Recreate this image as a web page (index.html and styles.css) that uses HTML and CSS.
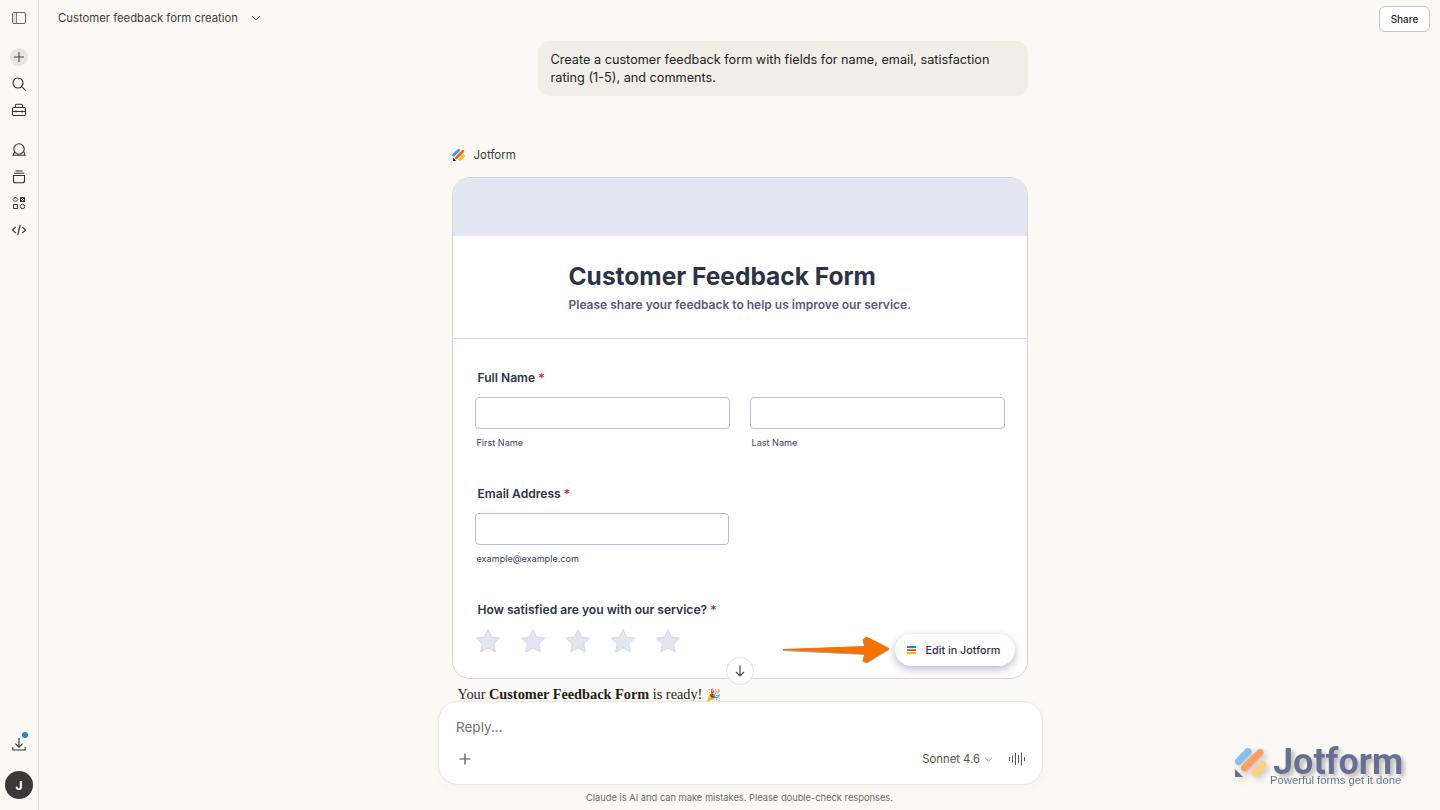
FILE: index.html
```html
<!DOCTYPE html>
<html lang="en">
<head>
    <meta charset="UTF-8">
    <meta name="viewport" content="width=device-width, initial-scale=1.0">
    <title>Customer feedback form creation</title>
    <link rel="stylesheet" href="styles.css">
</head>
<body>
    <aside class="sidebar">
        <button class="side-btn side-toggle">
            <svg width="16" height="16" viewBox="0 0 16 16" fill="none" stroke="#6b6a65" stroke-width="1"><rect x="1.5" y="2.5" width="13" height="11" rx="1.5"/><path d="M5.5 2.5v11"/><rect x="2" y="3" width="3.5" height="10" fill="#c9c8c2" stroke="none" opacity=".5"/></svg>
        </button>
        <div class="side-group">
            <button class="side-btn side-new">
                <svg width="14" height="14" viewBox="0 0 14 14" fill="none" stroke="#4a4945" stroke-width="1.1"><path d="M7 2v10M2 7h10"/></svg>
            </button>
            <button class="side-btn">
                <svg width="16" height="16" viewBox="0 0 16 16" fill="none" stroke="#33322f" stroke-width="1.1"><circle cx="7" cy="7" r="5"/><path d="M10.7 10.7l4 4"/></svg>
            </button>
            <button class="side-btn">
                <svg width="16" height="16" viewBox="0 0 16 16" fill="none" stroke="#33322f" stroke-width="1.1"><rect x="1.5" y="5.5" width="13" height="8" rx="1.2"/><path d="M4.5 5.5V3.2c0-.6.4-1 1-1h5c.6 0 1 .4 1 1v2.3M1.5 9.5h13M5 8.5v2M11 8.5v2"/></svg>
            </button>
        </div>
        <div class="side-group side-group-two">
            <button class="side-btn">
                <svg width="16" height="16" viewBox="0 0 16 16" fill="none" stroke="#33322f" stroke-width="1.1"><circle cx="8" cy="7" r="5.2"/><path d="M3.7 10L2 13.3h12l-1.3-4"/></svg>
            </button>
            <button class="side-btn">
                <svg width="16" height="16" viewBox="0 0 16 16" fill="none" stroke="#33322f" stroke-width="1.1"><path d="M4.4 2h7.2M2.8 4.2h10.4"/><path d="M2.5 6.5h11v5.3c0 1.1-.9 2-2 2h-7c-1.1 0-2-.9-2-2z"/></svg>
            </button>
            <button class="side-btn">
                <svg width="14" height="14" viewBox="0 0 14 14" fill="none" stroke="#33322f" stroke-width="1"><path d="M3.5 1L6 3.5 3.5 6 1 3.5z"/><path d="M8.5 1.5h4v4h-4zM8.5 1.5l4 4M12.5 1.5l-4 4"/><path d="M1.5 8.5h4v4h-4z"/><circle cx="10.5" cy="10.5" r="2.2"/></svg>
            </button>
            <button class="side-btn">
                <svg width="16" height="16" viewBox="0 0 16 16" fill="none" stroke="#33322f" stroke-width="1.1"><path d="M4.8 4.8L1.5 8l3.3 3.2M11.2 4.8L14.5 8l-3.3 3.2M9.2 3L6.8 13"/></svg>
            </button>
        </div>
        <div class="side-bottom">
            <button class="side-btn side-download">
                <svg width="16" height="16" viewBox="0 0 16 16" fill="none" stroke="#33322f" stroke-width="1.1"><path d="M8 2v9M4.4 7.6L8 11.2l3.6-3.6M1.8 11v3h12.4v-3"/></svg>
                <span class="notify-dot"></span>
            </button>
            <div class="avatar">J</div>
        </div>
    </aside>

    <main class="main">
        <header class="topbar">
            <div class="chat-title">
                <span>Customer feedback form creation</span>
                <svg width="12" height="12" viewBox="0 0 12 12" fill="none" stroke="#55534e" stroke-width="1"><path d="M2 4l4 4 4-4"/></svg>
            </div>
            <button class="share-btn">Share</button>
        </header>

        <div class="chat">
            <div class="user-msg">Create a customer feedback form with fields for name, email, satisfaction rating (1-5), and comments.</div>

            <div class="tool-label">
                <svg width="14" height="14" viewBox="0 0 14 14"><path d="M1.5 7.3L6.6 2.2" stroke="#3f97ef" stroke-width="2.8" stroke-linecap="round"/><path d="M4.4 9.7l6.4-6.5" stroke="#ff6100" stroke-width="2.8" stroke-linecap="round"/><path d="M8 11.4l3.4-3.4" stroke="#ffb629" stroke-width="2.8" stroke-linecap="round"/><path d="M1 9.8v3.2h3.2z" fill="#0a1551"/></svg>
                <span>Jotform</span>
            </div>

            <section class="form-card">
                <div class="form-banner"></div>
                <div class="form-head">
                    <h1>Customer Feedback Form</h1>
                    <p>Please share your feedback to help us improve our service.</p>
                </div>
                <div class="form-body">
                    <div class="field field-name">
                        <label>Full Name <em>*</em></label>
                        <div class="name-row">
                            <div>
                                <div class="input"></div>
                                <small>First Name</small>
                            </div>
                            <div>
                                <div class="input"></div>
                                <small>Last Name</small>
                            </div>
                        </div>
                    </div>
                    <div class="field field-email">
                        <label>Email Address <em>*</em></label>
                        <div class="input input-email"></div>
                        <small>example@example.com</small>
                    </div>
                    <div class="field">
                        <label>How satisfied are you with our service? <em>*</em></label>
                        <div class="stars">
                            <svg class="star" viewBox="0 0 26 26"><path d="M13 1.5l3.5 7.6 8.2 1-6 5.7 1.6 8.2-7.3-4.1-7.3 4.1 1.6-8.2-6-5.7 8.2-1z"/></svg>
                            <svg class="star" viewBox="0 0 26 26"><path d="M13 1.5l3.5 7.6 8.2 1-6 5.7 1.6 8.2-7.3-4.1-7.3 4.1 1.6-8.2-6-5.7 8.2-1z"/></svg>
                            <svg class="star" viewBox="0 0 26 26"><path d="M13 1.5l3.5 7.6 8.2 1-6 5.7 1.6 8.2-7.3-4.1-7.3 4.1 1.6-8.2-6-5.7 8.2-1z"/></svg>
                            <svg class="star" viewBox="0 0 26 26"><path d="M13 1.5l3.5 7.6 8.2 1-6 5.7 1.6 8.2-7.3-4.1-7.3 4.1 1.6-8.2-6-5.7 8.2-1z"/></svg>
                            <svg class="star" viewBox="0 0 26 26"><path d="M13 1.5l3.5 7.6 8.2 1-6 5.7 1.6 8.2-7.3-4.1-7.3 4.1 1.6-8.2-6-5.7 8.2-1z"/></svg>
                        </div>
                    </div>
                </div>
                <button class="edit-btn">
                    <span class="edit-icon"><i></i><i></i><i></i></span>
                    Edit in Jotform
                </button>
            </section>

            <!-- orange callout drawn on top of the screenshot -->
            <svg class="callout-arrow" width="110" height="28" viewBox="0 0 110 28">
                <path d="M1 13.5L83 10.5 81 3.5 84.5 1 107 12.5 85 26 81 24.5 83 17.5z" fill="#f47200" stroke="#f47200" stroke-width="1" stroke-linejoin="round"/>
            </svg>

            <button class="scroll-down">
                <svg width="14" height="14" viewBox="0 0 14 14" fill="none" stroke="#4a4945" stroke-width="1.2"><path d="M7 1.5v10.5M3 8l4 4 4-4"/></svg>
            </button>

            <p class="reply-msg">Your <strong>Customer Feedback Form</strong> is ready! <span class="party">🎉</span></p>
        </div>

        <div class="composer">
            <div class="composer-input">Reply...</div>
            <div class="composer-row">
                <svg width="14" height="14" viewBox="0 0 14 14" fill="none" stroke="#55534e" stroke-width="1.2"><path d="M7 1.5v11M1.5 7h11"/></svg>
                <div class="composer-right">
                    <span class="model">Sonnet 4.6</span>
                    <svg width="9" height="9" viewBox="0 0 10 10" fill="none" stroke="#9a9993" stroke-width="1"><path d="M1.5 3.5L5 7l3.5-3.5"/></svg>
                    <svg class="voice" width="18" height="16" viewBox="0 0 18 16" fill="none" stroke="#55534e" stroke-width="1"><path d="M1.5 6v4M4.5 4.5v7M7.5 2v12M10.5 4v8M13.5 1.5v13M16.5 6v4"/></svg>
                </div>
            </div>
        </div>
        <p class="disclaimer">Claude is AI and can make mistakes. Please double-check responses.</p>

        <div class="watermark">
            <svg width="34" height="34" viewBox="0 0 34 34"><g stroke-linecap="round" stroke-width="7"><path d="M4.5 16.5L14 6.5" stroke="#3f97ef"/><path d="M10.5 23L26 7.5" stroke="#ff6100"/><path d="M21 28L29 20" stroke="#ffb629"/></g><path d="M1 24v8h8z" fill="#0a1551"/></svg>
            <div class="watermark-text">
                <span class="watermark-name">Jotform</span>
                <span class="watermark-tag">Powerful forms get it done</span>
            </div>
        </div>
    </main>
</body>
</html>
```

FILE: styles.css
```css
* {
    margin: 0;
    padding: 0;
    box-sizing: border-box;
}

body {
    font-family: 'Inter', sans-serif;
    background-color: #faf9f5;
    color: #1f1e1d;
    display: flex;
    height: 100vh;
    overflow: hidden;
}

button {
    border: none;
    background: none;
    font-family: inherit;
    cursor: pointer;
}

/* Sidebar */
.sidebar {
    width: 39px;
    flex-shrink: 0;
    border-right: 1px solid #dedcd5;
    display: flex;
    flex-direction: column;
    align-items: center;
    padding-top: 5px;
}

.side-btn {
    width: 26px;
    height: 26px;
    display: flex;
    align-items: center;
    justify-content: center;
    border-radius: 50%;
    position: relative;
}

.side-group {
    display: flex;
    flex-direction: column;
    gap: 0.5px;
    margin-top: 13px;
}

.side-group-two {
    margin-top: 14px;
}

.side-new {
    width: 18px;
    height: 18px;
    margin: 4px;
    background-color: #e6e5e0;
}

.side-bottom {
    margin-top: auto;
    display: flex;
    flex-direction: column;
    align-items: center;
    gap: 14px;
    padding-bottom: 11px;
}

.notify-dot {
    position: absolute;
    top: 1px;
    right: 4px;
    width: 6px;
    height: 6px;
    border-radius: 50%;
    background-color: #2c84db;
}

.avatar {
    width: 28px;
    height: 28px;
    border-radius: 50%;
    background-color: #3a3937;
    color: #fff;
    font-size: 12px;
    font-weight: 700;
    display: flex;
    align-items: center;
    justify-content: center;
}

/* Main area */
.main {
    flex: 1;
    display: flex;
    flex-direction: column;
    align-items: center;
    position: relative;
    min-width: 0;
}

.topbar {
    width: 100%;
    height: 41px;
    flex-shrink: 0;
    display: flex;
    justify-content: space-between;
    padding: 6px 10px 0 19px;
}

.chat-title {
    display: flex;
    align-items: center;
    gap: 12px;
    height: 24px;
    font-size: 11.3px;
    color: #3d3d3a;
}

.share-btn {
    width: 51px;
    height: 26px;
    border: 1px solid #c6c5be;
    border-radius: 6px;
    background-color: #fff;
    font-size: 10px;
    font-weight: 500;
    color: #1f1e1d;
}

/* Chat column */
.chat {
    width: 576px;
    flex: 1;
    min-height: 0;
    position: relative;
}

.user-msg {
    width: 490px;
    margin-left: 86px;
    padding: 10px 13px 9px;
    background-color: #f0eee6;
    border-radius: 12px;
    font-size: 12.7px;
    line-height: 18px;
    color: #1f1e1d;
}

.tool-label {
    display: flex;
    align-items: center;
    gap: 8px;
    margin-top: 49px;
    height: 20px;
    font-size: 11.5px;
    color: #3d3d3a;
}

.form-card {
    margin-top: 12px;
    height: 502px;
    background-color: #fff;
    border: 1px solid #d6d5d0;
    border-radius: 18px;
    overflow: hidden;
    position: relative;
}

.form-banner {
    height: 58px;
    background-color: #e3e5f3;
}

.form-head {
    height: 103px;
    padding: 26px 0 0 116px;
    border-bottom: 1px solid #d4d6e0;
}

.form-head h1 {
    font-size: 24.5px;
    line-height: 28px;
    font-weight: 700;
    color: #2c3345;
}

.form-head p {
    margin-top: 7px;
    font-size: 12px;
    font-weight: 600;
    color: #57597c;
}

.form-body {
    padding: 29px 22px 0;
}

.field label {
    display: block;
    margin: 0 3px 10px;
    height: 19px;
    line-height: 19px;
    font-size: 12.1px;
    font-weight: 600;
    color: #2c3345;
}

.field em {
    font-style: normal;
    color: #e0202e;
}

.field small {
    display: block;
    margin: 7px 2px 0;
    font-size: 9.1px;
    line-height: 13px;
    color: #3d4060;
}

.name-row {
    display: grid;
    grid-template-columns: 255px 255px;
    gap: 20px;
}

.input {
    height: 32px;
    border: 1px solid #b8bdc9;
    border-radius: 4px;
    background-color: #fff;
}

.input-email {
    width: 254px;
}

.field-name {
    height: 116px;
}

.field-email {
    height: 116px;
}

.stars {
    display: flex;
    gap: 19px;
    margin-top: -1px;
}

.star {
    width: 26px;
    height: 26px;
}

.star path {
    fill: #e3e5f0;
    stroke: #d5d8e6;
    stroke-width: 1;
    stroke-linejoin: round;
}

.edit-btn {
    position: absolute;
    right: 12px;
    bottom: 12px;
    width: 120px;
    height: 32px;
    border-radius: 16px;
    background-color: #fff;
    box-shadow: 0 3px 8px rgba(10, 21, 81, 0.3);
    display: flex;
    align-items: center;
    gap: 10px;
    padding-left: 12px;
    font-size: 10.8px;
    font-weight: 500;
    color: #2c3345;
}

.edit-icon {
    display: flex;
    flex-direction: column;
    width: 9px;
    gap: 1px;
}

.edit-icon i {
    display: block;
    height: 2px;
}

.edit-icon i:nth-child(1) { background-color: #0a8cff; }
.edit-icon i:nth-child(2) { background-color: #ff6100; }
.edit-icon i:nth-child(3) { background-color: #ffb629; }

.callout-arrow {
    position: absolute;
    left: 330px;
    top: 595px;
    filter: drop-shadow(0 1px 0.5px rgba(0, 0, 0, 0.35));
}

.scroll-down {
    position: absolute;
    left: 274px;
    top: 616px;
    width: 28px;
    height: 28px;
    border-radius: 50%;
    background-color: #fff;
    border: 1px solid #e4e3dd;
    display: flex;
    align-items: center;
    justify-content: center;
}

.reply-msg {
    margin: 5px 0 0 6px;
    font-family: 'Liberation Serif', serif;
    font-size: 14.3px;
    line-height: 20px;
    color: #1f1e1d;
}

.party {
    font-size: 12px;
}

/* Composer */
.composer {
    position: absolute;
    left: 399px;
    top: 701px;
    width: 605px;
    height: 84px;
    background-color: #fff;
    border: 1px solid #e8e7e1;
    border-radius: 20px;
    box-shadow: 0 2px 8px rgba(0, 0, 0, 0.03);
    padding: 16px 16px 0 17px;
}

.composer-input {
    font-size: 13.5px;
    line-height: 18px;
    color: #73726c;
}

.composer-row {
    display: flex;
    justify-content: space-between;
    align-items: center;
    margin-top: 15px;
    padding-left: 2px;
}

.composer-right {
    display: flex;
    align-items: center;
    gap: 4px;
}

.model {
    font-size: 11.3px;
    color: #55534e;
}

.voice {
    margin-left: 11px;
}

.disclaimer {
    position: absolute;
    left: 0;
    right: 0;
    top: 792px;
    text-align: center;
    font-size: 9.3px;
    line-height: 12px;
    color: #6b6a65;
}

/* Watermark over the corner */
.watermark {
    position: absolute;
    left: 1195px;
    top: 748px;
    display: flex;
    gap: 5px;
    opacity: 0.6;
}

.watermark svg {
    margin-top: -3px;
    filter: drop-shadow(3px 3px 3px rgba(0, 0, 0, 0.35));
}

.watermark-text {
    display: flex;
    flex-direction: column;
}

.watermark-name {
    font-family: 'Roboto', sans-serif;
    font-size: 36px;
    line-height: 28px;
    font-weight: 700;
    color: #0a1551;
    text-shadow: 3px 3px 4px rgba(0, 0, 0, 0.45);
}

.watermark-tag {
    font-family: 'Liberation Sans', sans-serif;
    font-size: 11.3px;
    line-height: 9px;
    color: #0a1551;
    margin-left: -3px;
}
```
